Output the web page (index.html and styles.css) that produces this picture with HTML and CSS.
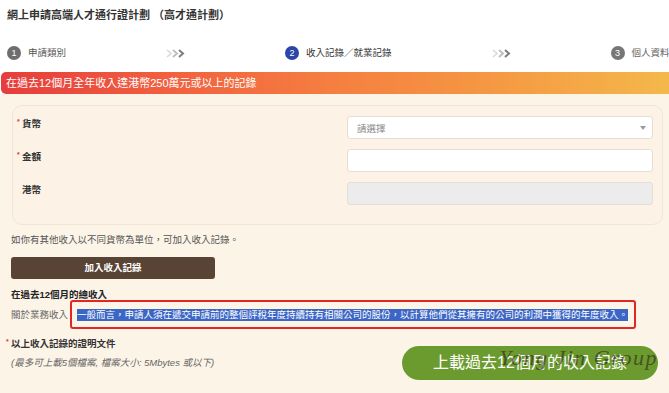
FILE: index.html
```html
<!DOCTYPE html>
<html lang="zh-Hant">
<head>
<meta charset="utf-8">
<title>網上申請高端人才通行證計劃</title>
<link rel="stylesheet" href="styles.css">
</head>
<body>
<header class="page-head">
  <h1 class="title">網上申請高端人才通行證計劃 （高才通計劃）</h1>
  <ol class="steps">
    <li class="step"><span class="step-num">1</span><span class="step-label">申請類別</span></li>
    <li class="chev"><svg width="19" height="9" viewBox="0 0 19 9"><path d="M1 1l4 3.5L1 8" fill="none" stroke="#dadada" stroke-width="1.6"/><path d="M7 1l4 3.5L7 8" fill="none" stroke="#bdbdbd" stroke-width="1.8"/><path d="M13 1l4 3.5L13 8" fill="none" stroke="#7d7d7d" stroke-width="2"/></svg></li>
    <li class="step step-active"><span class="step-num">2</span><span class="step-label">收入記錄／就業記錄</span></li>
    <li class="chev"><svg width="19" height="9" viewBox="0 0 19 9"><path d="M1 1l4 3.5L1 8" fill="none" stroke="#dadada" stroke-width="1.6"/><path d="M7 1l4 3.5L7 8" fill="none" stroke="#bdbdbd" stroke-width="1.8"/><path d="M13 1l4 3.5L13 8" fill="none" stroke="#7d7d7d" stroke-width="2"/></svg></li>
    <li class="step step-last"><span class="step-num">3</span><span class="step-label">個人資料</span></li>
  </ol>
  <div class="banner">在過去12個月全年收入達港幣250萬元或以上的記錄</div>
</header>
<main class="content">
  <section class="card">
    <div class="field-label"><span class="req">*</span>貨幣</div>
    <div class="input select"><span>請選擇</span><svg width="6" height="4" viewBox="0 0 6 4"><path d="M0 0h6L3 4z" fill="#9a9a9a"/></svg></div>
    <div class="field-label"><span class="req">*</span>金額</div>
    <div class="input"></div>
    <div class="field-label"><span class="req"></span>港幣</div>
    <div class="input input-disabled"></div>
  </section>
  <p class="hint">如你有其他收入以不同貨幣為單位，可加入收入記錄。</p>
  <button class="btn-add">加入收入記錄</button>
  <h3 class="total-title">在過去12個月的總收入</h3>
  <div class="biz-row">
    <span class="biz-label">關於業務收入</span>
    <div class="biz-box"><mark class="sel">一般而言，申請人須在遞交申請前的整個評稅年度持續持有相關公司的股份，以計算他們從其擁有的公司的利潤中獲得的年度收入。</mark></div>
  </div>
  <div class="proof-row">
    <div class="proof-text">
      <div class="proof-title"><span class="req">*</span>以上收入記錄的證明文件</div>
      <div class="proof-note">(最多可上載5個檔案, 檔案大小: 5Mbytes 或以下)</div>
    </div>
    <button class="btn-upload">上載過去12個月的收入記錄</button>
    <span class="watermark">Yong Jin Group</span>
  </div>
</main>
</body>
</html>
```
FILE: styles.css
```css
* { box-sizing: border-box; margin: 0; padding: 0; }
html, body { width: 669px; height: 393px; overflow: hidden; }
body {
  background: #fdf4e8;
  font-family: "Liberation Sans", "Noto Sans CJK TC", sans-serif;
  font-size: 9.5px;
  color: #333;
}
.page-head { background: #fff; padding-top: 9px; }
.title {
  font-size: 11px;
  line-height: 13px;
  font-weight: 700;
  color: #333;
  padding-left: 7px;
}
.steps {
  list-style: none;
  display: flex;
  align-items: center;
  gap: 100px;
  margin-top: 24px;
  padding-left: 7px;
  height: 14px;
  white-space: nowrap;
}
.step { display: flex; align-items: center; gap: 7px; color: #555; }
.step-num {
  width: 14px;
  height: 14px;
  border-radius: 50%;
  background: #6e6e6e;
  color: #fff;
  font-size: 9px;
  line-height: 14px;
  text-align: center;
}
.step-label { line-height: 14px; }
.step-active .step-num { background: #2b45a9; }
.step-active .step-label { color: #333; }
.step-last .step-num { background: #777; }
.step-last .step-label { color: #666; }
.chev svg { display: block; }
.banner {
  margin: 12px 0 0 1px;
  height: 22px;
  line-height: 22px;
  padding-left: 5px;
  color: #fff;
  font-size: 11px;
  border-radius: 5px 0 0 5px;
  background: linear-gradient(90deg, #e63d3d 0%, #f1603f 25%, #f57f40 50%, #f59a43 75%, #f4b84a 100%);
}
.content { padding: 11px 11px 0 11px; }
.card {
  margin: 0 -5px 0 1px;
  border: 1px solid #f2e5d5;
  border-radius: 10px;
  background: #fcf2e6;
  display: grid;
  grid-template-columns: 1fr 306px;
  row-gap: 10px;
  padding: 10px 9px 19px 4px;
}
.field-label {
  line-height: 13px;
  margin-top: 1px;
  font-weight: 700;
  color: #333;
}
.req {
  display: inline-block;
  width: 5px;
  color: #e03a3a;
  font-size: 7px;
  line-height: 9px;
  vertical-align: top;
}
.input {
  height: 23px;
  border: 1px solid #e8ddd0;
  border-radius: 3px;
  background: #fff;
}
.select {
  display: flex;
  align-items: center;
  justify-content: space-between;
  padding: 0 6px 0 9px;
  color: #888;
}
.input-disabled { background: #ececec; border-color: #e2ddd7; }
.hint { margin-top: 8px; line-height: 14px; color: #555; }
.btn-add {
  display: block;
  margin-top: 10px;
  width: 204px;
  height: 22px;
  border: 0;
  border-radius: 3px;
  background: #584335;
  color: #fff;
  font: 700 9.5px/22px "Liberation Sans", "Noto Sans CJK TC", sans-serif;
}
.total-title {
  margin-top: 11px;
  font-size: 9.5px;
  line-height: 10px;
  font-weight: 700;
  color: #222;
}
.biz-row { display: flex; align-items: center; }
.biz-label { width: 59px; color: #666; line-height: 13px; }
.biz-box {
  width: 566px;
  height: 29px;
  border: 2px solid #e32525;
  border-radius: 3px;
  padding-left: 5px;
  display: flex;
  align-items: center;
}
.sel {
  background: #3c66c5;
  color: #fff;
  line-height: 12px;
  white-space: nowrap;
}
.proof-row {
  position: relative;
  display: flex;
  justify-content: space-between;
  align-items: flex-start;
  margin-top: 8px;
}
.proof-title {
  margin-left: -5px;
  line-height: 13px;
  font-weight: 700;
  color: #333;
}
.proof-note {
  margin-top: 6px;
  line-height: 13px;
  font-style: italic;
  color: #666;
}
.btn-upload {
  margin-top: 9px;
  width: 256px;
  height: 34px;
  border: 0;
  border-radius: 17px;
  background: #6b9b2e;
  color: #fff;
  font: 400 16px/34px "Liberation Sans", "Noto Sans CJK TC", sans-serif;
}
.watermark {
  position: absolute;
  right: 0;
  top: 6px;
  font-family: "Liberation Serif", serif;
  font-style: italic;
  font-size: 22px;
  line-height: 30px;
  letter-spacing: 1.5px;
  color: rgba(45, 32, 24, 0.6);
  pointer-events: none;
}
```
